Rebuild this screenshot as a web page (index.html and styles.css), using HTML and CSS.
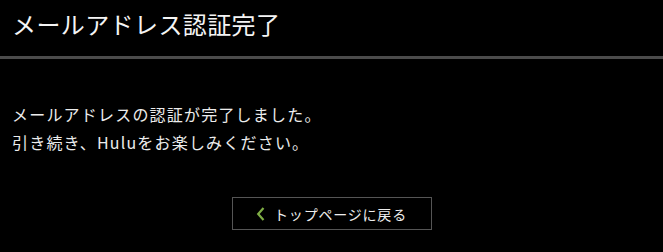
FILE: index.html
```html
<!DOCTYPE html>
<html lang="ja">
<head>
<meta charset="utf-8">
<link rel="stylesheet" href="styles.css">
</head>
<body>
<header class="page-header">
  <h1 class="page-title">メールアドレス認証完了</h1>
</header>
<main class="content">
  <p class="message">メールアドレスの認証が完了しました。<br>引き続き、Huluをお楽しみください。</p>
  <div class="actions">
    <a class="back-btn" href="#">
      <svg class="chev" width="9" height="14" viewBox="0 0 9 14"><path d="M7.5 1 L2.2 7 L7.5 13" fill="none" stroke="#7fae45" stroke-width="2.2"/></svg>
      <span class="back-label">トップページに戻る</span>
    </a>
  </div>
</main>
</body>
</html>
```
FILE: styles.css
```css
html, body {
  margin: 0;
  padding: 0;
  background: #000;
  color: #ededed;
  font-family: "Noto Sans CJK JP", "Noto Sans", sans-serif;
}
.page-header {
  height: 56px;
  border-bottom: 3px solid #4b4b4b;
  padding: 0 12px;
  box-sizing: content-box;
}
.page-title {
  margin: 0;
  font-size: 24px;
  line-height: 48px;
  font-weight: 400;
  letter-spacing: 0.4px;
  color: #f4f4f4;
}
.content {
  padding: 41px 12px 0;
}
.message {
  margin: 0;
  font-size: 16px;
  line-height: 28px;
  letter-spacing: 1.2px;
  color: #ececec;
}
.actions {
  display: flex;
  justify-content: center;
  margin-top: 41px;
}
.back-btn {
  display: flex;
  align-items: center;
  justify-content: center;
  gap: 9px;
  width: 200px;
  height: 33px;
  box-sizing: border-box;
  border: 1px solid #555;
  color: #ededed;
  text-decoration: none;
  font-size: 14px;
  letter-spacing: 0.8px;
}
.chev {
  display: block;
}
.back-label {
  line-height: 20px;
}
```
